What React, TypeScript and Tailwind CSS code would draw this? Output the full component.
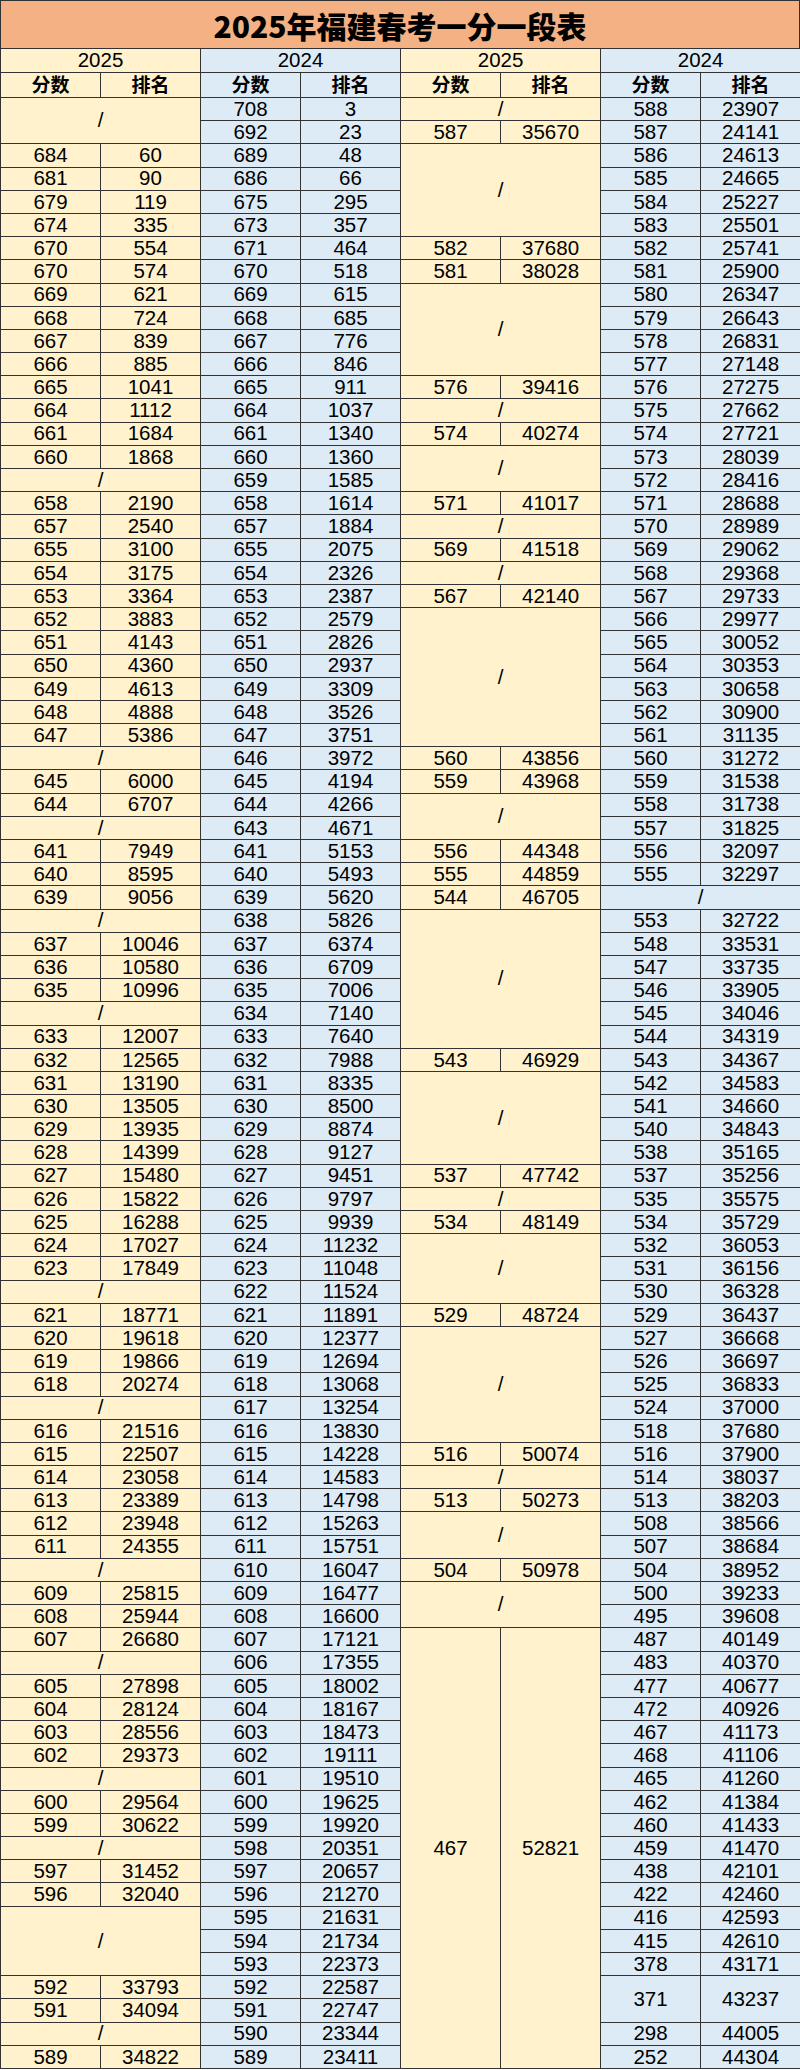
import { Fragment } from "react";

type Seg = [string, string, number?] | number;

// 2025 左
const block25a: Seg[] = [
  2, ["684", "60"], ["681", "90"], ["679", "119"], ["674", "335"], ["670", "554"], ["670", "574"],
  ["669", "621"], ["668", "724"], ["667", "839"], ["666", "885"], ["665", "1041"], ["664", "1112"],
  ["661", "1684"], ["660", "1868"], 1, ["658", "2190"], ["657", "2540"], ["655", "3100"], ["654", "3175"],
  ["653", "3364"], ["652", "3883"], ["651", "4143"], ["650", "4360"], ["649", "4613"], ["648", "4888"],
  ["647", "5386"], 1, ["645", "6000"], ["644", "6707"], 1, ["641", "7949"], ["640", "8595"], ["639", "9056"],
  1, ["637", "10046"], ["636", "10580"], ["635", "10996"], 1, ["633", "12007"], ["632", "12565"],
  ["631", "13190"], ["630", "13505"], ["629", "13935"], ["628", "14399"], ["627", "15480"], ["626", "15822"],
  ["625", "16288"], ["624", "17027"], ["623", "17849"], 1, ["621", "18771"], ["620", "19618"], ["619", "19866"],
  ["618", "20274"], 1, ["616", "21516"], ["615", "22507"], ["614", "23058"], ["613", "23389"], ["612", "23948"],
  ["611", "24355"], 1, ["609", "25815"], ["608", "25944"], ["607", "26680"], 1, ["605", "27898"],
  ["604", "28124"], ["603", "28556"], ["602", "29373"], 1, ["600", "29564"], ["599", "30622"], 1,
  ["597", "31452"], ["596", "32040"], 3, ["592", "33793"], ["591", "34094"], 1, ["589", "34822"],
];

// 2024 左
const block24a: Seg[] = [
  ["708", "3"], ["692", "23"], ["689", "48"], ["686", "66"], ["675", "295"], ["673", "357"], ["671", "464"],
  ["670", "518"], ["669", "615"], ["668", "685"], ["667", "776"], ["666", "846"], ["665", "911"],
  ["664", "1037"], ["661", "1340"], ["660", "1360"], ["659", "1585"], ["658", "1614"], ["657", "1884"],
  ["655", "2075"], ["654", "2326"], ["653", "2387"], ["652", "2579"], ["651", "2826"], ["650", "2937"],
  ["649", "3309"], ["648", "3526"], ["647", "3751"], ["646", "3972"], ["645", "4194"], ["644", "4266"],
  ["643", "4671"], ["641", "5153"], ["640", "5493"], ["639", "5620"], ["638", "5826"], ["637", "6374"],
  ["636", "6709"], ["635", "7006"], ["634", "7140"], ["633", "7640"], ["632", "7988"], ["631", "8335"],
  ["630", "8500"], ["629", "8874"], ["628", "9127"], ["627", "9451"], ["626", "9797"], ["625", "9939"],
  ["624", "11232"], ["623", "11048"], ["622", "11524"], ["621", "11891"], ["620", "12377"], ["619", "12694"],
  ["618", "13068"], ["617", "13254"], ["616", "13830"], ["615", "14228"], ["614", "14583"], ["613", "14798"],
  ["612", "15263"], ["611", "15751"], ["610", "16047"], ["609", "16477"], ["608", "16600"], ["607", "17121"],
  ["606", "17355"], ["605", "18002"], ["604", "18167"], ["603", "18473"], ["602", "19111"], ["601", "19510"],
  ["600", "19625"], ["599", "19920"], ["598", "20351"], ["597", "20657"], ["596", "21270"], ["595", "21631"],
  ["594", "21734"], ["593", "22373"], ["592", "22587"], ["591", "22747"], ["590", "23344"], ["589", "23411"],
];

// 2025 右
const block25b: Seg[] = [
  1, ["587", "35670"], 4, ["582", "37680"], ["581", "38028"], 4, ["576", "39416"], 1, ["574", "40274"], 2,
  ["571", "41017"], 1, ["569", "41518"], 1, ["567", "42140"], 6, ["560", "43856"], ["559", "43968"], 2,
  ["556", "44348"], ["555", "44859"], ["544", "46705"], 6, ["543", "46929"], 4, ["537", "47742"], 1,
  ["534", "48149"], 3, ["529", "48724"], 5, ["516", "50074"], 1, ["513", "50273"], 2, ["504", "50978"], 2,
  ["467", "52821", 19],
];

// 2024 右
const block24b: Seg[] = [
  ["588", "23907"], ["587", "24141"], ["586", "24613"], ["585", "24665"], ["584", "25227"], ["583", "25501"],
  ["582", "25741"], ["581", "25900"], ["580", "26347"], ["579", "26643"], ["578", "26831"], ["577", "27148"],
  ["576", "27275"], ["575", "27662"], ["574", "27721"], ["573", "28039"], ["572", "28416"], ["571", "28688"],
  ["570", "28989"], ["569", "29062"], ["568", "29368"], ["567", "29733"], ["566", "29977"], ["565", "30052"],
  ["564", "30353"], ["563", "30658"], ["562", "30900"], ["561", "31135"], ["560", "31272"], ["559", "31538"],
  ["558", "31738"], ["557", "31825"], ["556", "32097"], ["555", "32297"], 1, ["553", "32722"],
  ["548", "33531"], ["547", "33735"], ["546", "33905"], ["545", "34046"], ["544", "34319"], ["543", "34367"],
  ["542", "34583"], ["541", "34660"], ["540", "34843"], ["538", "35165"], ["537", "35256"], ["535", "35575"],
  ["534", "35729"], ["532", "36053"], ["531", "36156"], ["530", "36328"], ["529", "36437"], ["527", "36668"],
  ["526", "36697"], ["525", "36833"], ["524", "37000"], ["518", "37680"], ["516", "37900"], ["514", "38037"],
  ["513", "38203"], ["508", "38566"], ["507", "38684"], ["504", "38952"], ["500", "39233"], ["495", "39608"],
  ["487", "40149"], ["483", "40370"], ["477", "40677"], ["472", "40926"], ["467", "41173"], ["468", "41106"],
  ["465", "41260"], ["462", "41384"], ["460", "41433"], ["459", "41470"], ["438", "42101"], ["422", "42460"],
  ["416", "42593"], ["415", "42610"], ["378", "43171"], ["371", "43237", 2], ["298", "44005"], ["252", "44304"],
];

const ROWS = 85;

const blocks = [
  { segs: block25a, bg: "bg-[#fff2cc]" },
  { segs: block24a, bg: "bg-[#ddebf7]" },
  { segs: block25b, bg: "bg-[#fff2cc]" },
  { segs: block24b, bg: "bg-[#ddebf7]" },
];

const startsOf = (segs: Seg[]) => {
  const m = new Map<number, Seg>();
  let r = 0;
  for (const seg of segs) {
    m.set(r, seg);
    r += typeof seg === "number" ? seg : seg[2] ?? 1;
  }
  return m;
};

const starts = blocks.map((b) => startsOf(b.segs));

const cell = "border border-[#333333] p-0 text-center align-middle";

const App = () => {
  return (
    <div className="w-[800px] h-[2070px] overflow-hidden bg-white text-black font-['Liberation_Sans','Noto_Sans_CJK_SC',sans-serif]">
      <div className="h-[48px] bg-[#f4b183] border border-b-0 border-[#333333] flex items-center justify-center text-[30px] font-black leading-none font-['Noto_Sans_CJK_SC',sans-serif]">
        2025年福建春考一分一段表
      </div>
      <table className="w-full table-fixed border-collapse text-[20.5px] leading-none">
        <colgroup>
          {Array.from({ length: 8 }).map((_, i) => (
            <col key={i} className="w-[100px]" />
          ))}
        </colgroup>
        <thead>
          <tr className="h-[24px]">
            {["2025", "2024", "2025", "2024"].map((y, i) => (
              <th key={i} colSpan={2} className={`${cell} ${blocks[i].bg} font-normal`}>
                {y}
              </th>
            ))}
          </tr>
          <tr className="h-[25px]">
            {blocks.map((b, i) => (
              <Fragment key={i}>
                <th className={`${cell} ${b.bg} font-bold text-[19px]`}>分数</th>
                <th className={`${cell} ${b.bg} font-bold text-[19px]`}>排名</th>
              </Fragment>
            ))}
          </tr>
        </thead>
        <tbody>
          {Array.from({ length: ROWS }).map((_, r) => (
            <tr key={r} className="h-[23.2px]">
              {blocks.map((b, i) => {
                const seg = starts[i].get(r);
                if (seg === undefined) return null;
                if (typeof seg === "number") {
                  return (
                    <td key={i} colSpan={2} rowSpan={seg} className={`${cell} ${b.bg}`}>
                      /
                    </td>
                  );
                }
                const span = seg[2] ?? 1;
                return (
                  <Fragment key={i}>
                    <td rowSpan={span} className={`${cell} ${b.bg}`}>
                      {seg[0]}
                    </td>
                    <td rowSpan={span} className={`${cell} ${b.bg}`}>
                      {seg[1]}
                    </td>
                  </Fragment>
                );
              })}
            </tr>
          ))}
        </tbody>
      </table>
    </div>
  );
};

export default App;
